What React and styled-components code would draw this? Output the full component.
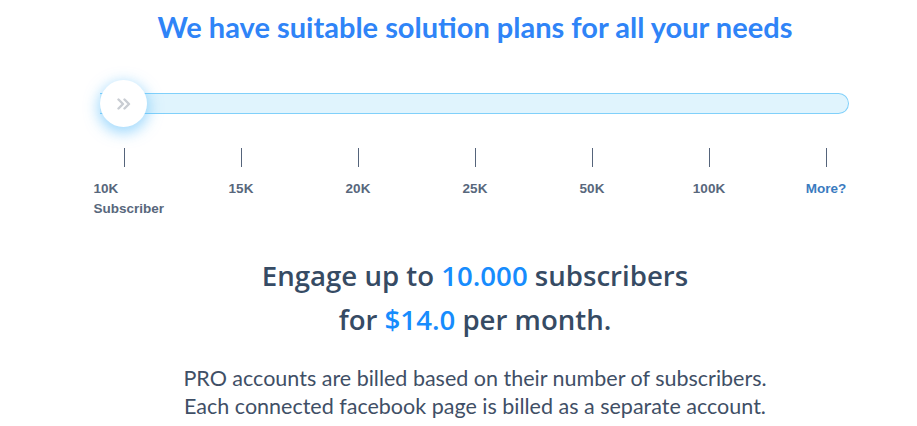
import React from "react";
import styled, { createGlobalStyle } from "styled-components";

const TICKS = ["10K", "15K", "20K", "25K", "50K", "100K", "More?"];

const GlobalStyle = createGlobalStyle`
  body {
    margin: 0;
    background: #ffffff;
    overflow: hidden;
    font-family: "Lato", "Open Sans", sans-serif;
  }
`;

const Page = styled.div`
  width: 950px;
  display: flex;
  flex-direction: column;
`;

const Title = styled.h1`
  margin: 9px 0 0;
  text-align: center;
  font-size: 29px;
  line-height: 36px;
  font-weight: 700;
  color: #2f84f7;
`;

const SliderArea = styled.div`
  position: relative;
  margin: 48px 101px 0 100px;
  height: 21px;
`;

const Track = styled.div`
  height: 100%;
  box-sizing: border-box;
  background: #e0f4fd;
  border: 1px solid #80d0fa;
  border-left: none;
  border-radius: 0 11px 11px 0;
`;

const Knob = styled.div`
  position: absolute;
  left: 0;
  top: -13px;
  width: 47px;
  height: 47px;
  border-radius: 50%;
  background: #ffffff;
  box-shadow: 0 4px 14px 2px rgba(84, 186, 250, 0.55);
  display: flex;
  align-items: center;
  justify-content: center;
`;

const Scale = styled.div`
  display: grid;
  grid-template-columns: repeat(7, 117px);
  justify-content: center;
  margin-top: 34px;
`;

const Stop = styled.div`
  display: flex;
  flex-direction: column;
  align-items: ${props => (props.first ? "flex-start" : "center")};
`;

const Tick = styled.span`
  width: 1px;
  height: 19px;
  background: #55647b;
  margin-left: ${props => (props.first ? "58px" : 0)};
`;

const Label = styled.span`
  margin-top: ${props => (props.sub ? 0 : "12px")};
  margin-left: ${props => (props.first ? "28px" : 0)};
  font-family: "Liberation Sans", Arial, sans-serif;
  font-size: 13.5px;
  line-height: 20px;
  font-weight: 700;
  color: ${props => (props.more ? "#3a7bbf" : "#58677c")};
`;

const Headline = styled.p`
  margin: 34px 0 0;
  text-align: center;
  font-family: "Open Sans", "Lato", sans-serif;
  font-size: 27.6px;
  line-height: 44px;
  font-weight: 600;
  color: #364b64;
`;

const Accent = styled.span`
  color: #178cfd;
`;

const Note = styled.p`
  margin: 23px 0 0;
  text-align: center;
  font-size: 21.5px;
  line-height: 28px;
  font-weight: 400;
  color: #3f4f66;
`;

function Chevrons() {
  return (
    <svg width="14" height="12" viewBox="0 0 14 12" fill="none">
      <path
        d="M1.5 1.5 L6 6 L1.5 10.5 M7.5 1.5 L12 6 L7.5 10.5"
        stroke="#c9cdd3"
        strokeWidth="2.4"
        strokeLinecap="round"
        strokeLinejoin="round"
      />
    </svg>
  );
}

export default function App() {
  return (
    <Page>
      <GlobalStyle />
      <Title>We have suitable solution plans for all your needs</Title>
      <SliderArea>
        <Track />
        <Knob>
          <Chevrons />
        </Knob>
      </SliderArea>
      <Scale>
        {TICKS.map((t, i) => (
          <Stop key={t} first={i === 0}>
            <Tick first={i === 0} />
            <Label first={i === 0} more={t === "More?"}>
              {t}
            </Label>
            {i === 0 && (
              <Label first sub>
                Subscriber
              </Label>
            )}
          </Stop>
        ))}
      </Scale>
      <Headline>
        Engage up to <Accent>10.000</Accent> subscribers
        <br />
        for <Accent>$14.0</Accent> per month.
      </Headline>
      <Note>
        PRO accounts are billed based on their number of subscribers.
        <br />
        Each connected facebook page is billed as a separate account.
      </Note>
    </Page>
  );
}
